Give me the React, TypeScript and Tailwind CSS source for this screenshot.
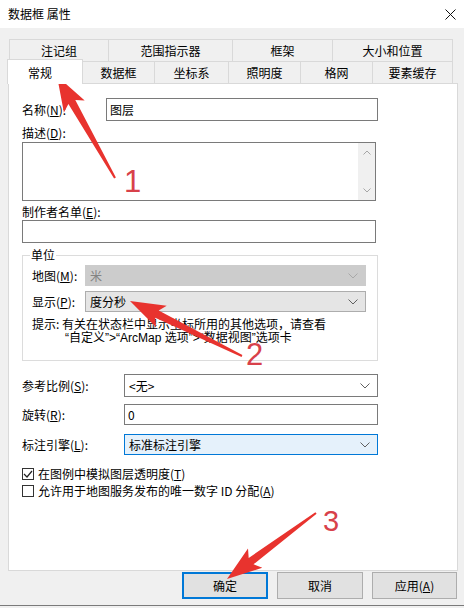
import React from "react";

type Pt = [number, number];

// red annotation arrow, tapered shaft + head
function arrowPoints(tail: Pt, tip: Pt, headLen = 30, headHalf = 12, neck = 4, tailHalf = 1) {
  const dx = tip[0] - tail[0];
  const dy = tip[1] - tail[1];
  const len = Math.hypot(dx, dy);
  const ux = dx / len;
  const uy = dy / len;
  const nx = -uy;
  const ny = ux;
  const bx = tip[0] - ux * headLen;
  const by = tip[1] - uy * headLen;
  const sx = bx - ux * 5;
  const sy = by - uy * 5;
  const pts: Pt[] = [
    [tail[0] + nx * tailHalf, tail[1] + ny * tailHalf],
    [bx + nx * neck, by + ny * neck],
    [sx + nx * headHalf, sy + ny * headHalf],
    tip,
    [sx - nx * headHalf, sy - ny * headHalf],
    [bx - nx * neck, by - ny * neck],
    [tail[0] - nx * tailHalf, tail[1] - ny * tailHalf],
  ];
  return pts.map((p) => `${p[0].toFixed(1)},${p[1].toFixed(1)}`).join(" ");
}

function Chevron({ color = "#606060" }: { color?: string }) {
  return (
    <svg width="10" height="6" viewBox="0 0 10 6">
      <path d="M0.5 0.5 L5 5 L9.5 0.5" fill="none" stroke={color} strokeWidth="1" />
    </svg>
  );
}

function Lbl({ text, k }: { text: string; k: string }) {
  return (
    <span>
      {text}(<span className="underline">{k}</span>):
    </span>
  );
}

function Combo({ value, box, text, chev }: { value: string; box: string; text?: string; chev?: string }) {
  return (
    <div className={`flex items-center justify-between pl-[4px] pr-[7px] border ${box}`}>
      <span className={text}>{value}</span>
      <Chevron color={chev} />
    </div>
  );
}

const tabs1 = [
  { name: "注记组", w: "w-[99px]" },
  { name: "范围指示器", w: "w-[124px]" },
  { name: "框架", w: "w-[100px]" },
  { name: "大小和位置", w: "w-[121px] border-r" },
];

const tabs2 = [
  { name: "数据框", w: "w-[71px]" },
  { name: "坐标系", w: "w-[74px] border-l" },
  { name: "照明度", w: "w-[72px] border-l" },
  { name: "格网", w: "w-[72px] border-l" },
  { name: "要素缓存", w: "w-[81px] border-l border-r" },
];

export default function App() {
  return (
    <div className="relative w-[464px] h-[608px] overflow-hidden bg-[#f0f0f0] text-[12px] leading-[14px] text-black font-['Microsoft_YaHei','Noto_Sans_CJK_SC',sans-serif]">
      {/* title bar */}
      <div className="h-[28px] bg-white flex items-center justify-between pl-[8px] pr-[8px]">
        <span className="text-[12px]">数据框 属性</span>
        <svg width="11" height="11" viewBox="0 0 11 11">
          <path d="M0.5 0.5 L10.5 10.5 M10.5 0.5 L0.5 10.5" stroke="#111" strokeWidth="1" />
        </svg>
      </div>

      {/* tabs */}
      <div className="mt-[11px] ml-[9px] flex h-[22px]">
        {tabs1.map((t) => (
          <div
            key={t.name}
            className={`${t.w} h-[22px] flex items-center justify-center border-t border-l border-[#d9d9d9]`}
          >
            {t.name}
          </div>
        ))}
      </div>
      <div className="-mt-[2px] ml-[7px] flex items-end h-[24px]">
        <div className="relative z-10 w-[76px] h-[25px] -mb-[1px] bg-white border-t border-l border-r border-[#d9d9d9] flex items-start justify-center pt-[6px] pr-[10px]">
          常规
        </div>
        {tabs2.map((t) => (
          <div
            key={t.name}
            className={`${t.w} h-[22px] flex items-center justify-center border-t border-[#d9d9d9]`}
          >
            {t.name}
          </div>
        ))}
      </div>

      {/* panel */}
      <div className="ml-[8px] w-[450px] h-[488px] bg-white border border-[#d9d9d9] pl-[13px] flex flex-col">
        <div className="mt-[14px] flex items-center h-[23px]">
          <div className="w-[84px]">
            <Lbl text="名称" k="N" />
          </div>
          <div className="w-[272px] h-[23px] border border-[#7a7a7a] flex items-center pl-[3px]">图层</div>
        </div>

        <div className="mt-[5px] h-[14px]">
          <Lbl text="描述" k="D" />
        </div>
        <div className="mt-[2px] w-[354px] h-[59px] border border-[#7a7a7a] flex justify-end">
          <div className="w-[17px] h-full bg-[#f0f0f0] flex flex-col items-center justify-between py-[7px]">
            <svg width="8" height="5" viewBox="0 0 8 5">
              <path d="M0.5 4.5 L4 1 L7.5 4.5" fill="none" stroke="#a6a6a6" strokeWidth="1" />
            </svg>
            <svg width="8" height="5" viewBox="0 0 8 5">
              <path d="M0.5 0.5 L4 4 L7.5 0.5" fill="none" stroke="#a6a6a6" strokeWidth="1" />
            </svg>
          </div>
        </div>

        <div className="mt-[4px] h-[14px]">
          <Lbl text="制作者名单" k="E" />
        </div>
        <div className="mt-[1px] w-[354px] h-[23px] border border-[#7a7a7a]" />

        {/* unit group */}
        <div className="mt-[12px] w-[356px] h-[106px] border border-[#dcdcdc] pl-[9px] pr-[11px] flex flex-col">
          <div className="-mt-[8px] h-[14px] -ml-[2px] px-[1px] bg-white self-start">单位</div>
          <div className="mt-[3px] flex items-center h-[21px]">
            <div className="w-[53px]">
              <Lbl text="地图" k="M" />
            </div>
            <Combo value="米" box="w-[281px] h-[21px] bg-[#cccccc] border-[#cccccc]" text="text-[#838383]" chev="#a8a8a8" />
          </div>
          <div className="mt-[5px] flex items-center h-[21px]">
            <div className="w-[53px]">
              <Lbl text="显示" k="P" />
            </div>
            <Combo value="度分秒" box="w-[281px] h-[21px] bg-[#e5e5e5] border-[#adadad]" />
          </div>
          <div className="mt-[4px] leading-[15px]">
            <div>提示: 有关在状态栏中显示坐标所用的其他选项，请查看</div>
            <div className="pl-[33px] font-['Liberation_Sans','Noto_Sans_CJK_SC',sans-serif]">
              “自定义”&gt;“ArcMap 选项”&gt;“数据视图”选项卡
            </div>
          </div>
        </div>

        <div className="mt-[13px] flex items-center h-[23px]">
          <div className="w-[102px]">
            <Lbl text="参考比例" k="S" />
          </div>
          <Combo value="<无>" box="w-[254px] h-[23px] bg-white border-[#7a7a7a]" />
        </div>
        <div className="mt-[7px] flex items-center h-[21px]">
          <div className="w-[102px]">
            <Lbl text="旋转" k="R" />
          </div>
          <div className="w-[254px] h-[21px] border border-[#7a7a7a] flex items-center pl-[3px]">0</div>
        </div>
        <div className="mt-[9px] flex items-center h-[21px]">
          <div className="w-[102px]">
            <Lbl text="标注引擎" k="L" />
          </div>
          <Combo value="标准标注引擎" box="w-[254px] h-[21px] bg-[#e5f1fb] border-[#0078d7]" />
        </div>

        <div className="mt-[11px] flex items-center h-[15px] gap-[4px]">
          <div className="w-[12px] h-[12px] border border-[#333] flex items-center justify-center">
            <svg width="10" height="8" viewBox="0 0 10 8">
              <path d="M1 4 L4 7 L9 1" fill="none" stroke="#222" strokeWidth="1.2" />
            </svg>
          </div>
          <span>
            在图例中模拟图层透明度(<span className="underline">T</span>)
          </span>
        </div>
        <div className="mt-[2px] flex items-center h-[15px] gap-[4px]">
          <div className="w-[12px] h-[12px] border border-[#333]" />
          <span>
            允许用于地图服务发布的唯一数字 ID 分配(<span className="underline">A</span>)
          </span>
        </div>
      </div>

      {/* buttons */}
      <div className="mt-[1px] flex justify-end gap-[9px] pr-[7px]">
        <button className="w-[86px] h-[27px] bg-[#e1e1e1] border-2 border-[#0078d7]">确定</button>
        <button className="w-[86px] h-[27px] bg-[#e1e1e1] border border-[#adadad]">取消</button>
        <button className="w-[85px] h-[27px] bg-[#e1e1e1] border border-[#adadad]">
          应用(<span className="underline">A</span>)
        </button>
      </div>
      <div className="mt-[6px] h-[1px] bg-[#7a7a7a]" />

      {/* annotation overlay */}
      <svg className="absolute left-0 top-0 pointer-events-none" width="464" height="608" viewBox="0 0 464 608">
        <polygon points={arrowPoints([115, 178], [57, 76])} fill="#e8332e" />
        <polygon points={arrowPoints([242, 356], [130, 301])} fill="#e8332e" />
        <polygon points={arrowPoints([316, 513], [227, 579])} fill="#e8332e" />
        <text x="124" y="192" fontSize="31" fill="#d8414a" fontFamily="'Liberation Sans', Arial, sans-serif">1</text>
        <text x="246" y="365" fontSize="31" fill="#d8414a" fontFamily="'Liberation Sans', Arial, sans-serif">2</text>
        <text x="323" y="531" fontSize="29" fill="#d8414a" fontFamily="'Liberation Sans', Arial, sans-serif">3</text>
      </svg>
    </div>
  );
}
